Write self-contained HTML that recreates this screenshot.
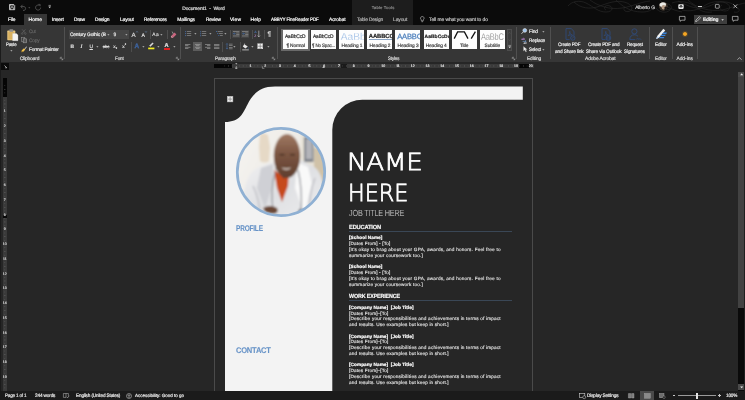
<!DOCTYPE html>
<html lang="en"><head><meta charset="utf-8"><title>Document1 - Word</title>
<style>
html,body{margin:0;padding:0;background:#262626;}
body{width:745px;height:400px;overflow:hidden;position:relative;font-family:"Liberation Sans",sans-serif;}
#w{position:absolute;left:0;top:0;width:745px;height:400px;overflow:hidden;background:#262626;will-change:transform;text-rendering:geometricPrecision;}
#w div,#w span.t,#w svg{position:absolute;}
#w span.t{white-space:nowrap;-webkit-text-stroke-width:0.18px;}
#w svg{overflow:visible;}
</style></head><body><div id="w">
<div style="left:0px;top:0px;width:745px;height:25px;background:#0b0b0b;"></div>
<div style="left:352px;top:0px;width:60.5px;height:25px;background:#1d1d1d;"></div>
<div style="left:24px;top:13.5px;width:23px;height:11.5px;background:#363636;"></div>
<div style="left:0px;top:25px;width:745px;height:36.5px;background:#363636;"></div>
<div style="left:0px;top:61.5px;width:745px;height:8.5px;background:#262626;"></div>
<span class="t" style="left:182.20px;top:7px;font-size:4.9px;line-height:5.88px;color:#e0e0e0;letter-spacing:-0.062px;white-space:pre;">Document1  -  Word</span>
<span class="t" style="left:371.80px;top:5px;font-size:4.2px;line-height:5.04px;color:#8c8c8c;letter-spacing:0.156px;">Table Tools</span>
<span class="t" style="left:635.20px;top:6px;font-size:4.9px;line-height:5.88px;color:#d8d8d8;letter-spacing:-0.100px;">Alberto G</span>
<span class="t" style="left:8.00px;top:18px;font-size:4.9px;line-height:5.88px;color:#ffffff;letter-spacing:-0.132px;">File</span>
<span class="t" style="left:28.50px;top:18px;font-size:4.9px;line-height:5.88px;color:#ffffff;letter-spacing:0.143px;">Home</span>
<span class="t" style="left:52.00px;top:18px;font-size:4.9px;line-height:5.88px;color:#ffffff;letter-spacing:-0.051px;">Insert</span>
<span class="t" style="left:74.00px;top:18px;font-size:4.9px;line-height:5.88px;color:#ffffff;letter-spacing:-0.145px;">Draw</span>
<span class="t" style="left:95.00px;top:18px;font-size:4.9px;line-height:5.88px;color:#ffffff;letter-spacing:-0.151px;">Design</span>
<span class="t" style="left:120.00px;top:18px;font-size:4.9px;line-height:5.88px;color:#ffffff;letter-spacing:-0.142px;">Layout</span>
<span class="t" style="left:144.00px;top:18px;font-size:4.9px;line-height:5.88px;color:#ffffff;letter-spacing:-0.147px;transform:scaleX(0.9690);transform-origin:0 50%;">References</span>
<span class="t" style="left:177.20px;top:18px;font-size:4.9px;line-height:5.88px;color:#ffffff;letter-spacing:-0.011px;">Mailings</span>
<span class="t" style="left:205.50px;top:18px;font-size:4.9px;line-height:5.88px;color:#ffffff;letter-spacing:-0.147px;transform:scaleX(0.9784);transform-origin:0 50%;">Review</span>
<span class="t" style="left:230.00px;top:18px;font-size:4.9px;line-height:5.88px;color:#ffffff;letter-spacing:0.156px;">View</span>
<span class="t" style="left:250.50px;top:18px;font-size:4.9px;line-height:5.88px;color:#ffffff;letter-spacing:0.141px;">Help</span>
<span class="t" style="left:270.80px;top:18px;font-size:4.9px;line-height:5.88px;color:#ffffff;letter-spacing:-0.147px;transform:scaleX(0.9305);transform-origin:0 50%;">ABBYY FineReader PDF</span>
<span class="t" style="left:329.00px;top:18px;font-size:4.9px;line-height:5.88px;color:#ffffff;letter-spacing:-0.048px;">Acrobat</span>
<span class="t" style="left:356.70px;top:18px;font-size:4.9px;line-height:5.88px;color:#b4b4b4;letter-spacing:-0.147px;transform:scaleX(0.9846);transform-origin:0 50%;">Table Design</span>
<span class="t" style="left:393.00px;top:18px;font-size:4.9px;line-height:5.88px;color:#b4b4b4;letter-spacing:-0.062px;">Layout</span>
<span class="t" style="left:429.00px;top:18px;font-size:4.9px;line-height:5.88px;color:#c4c4c4;letter-spacing:-0.056px;">Tell me what you want to do</span>
<div style="left:64.35px;top:27px;width:0.8px;height:31.5px;background:#505050;"></div>
<div style="left:180.2px;top:27px;width:0.8px;height:31.5px;background:#505050;"></div>
<div style="left:276.5px;top:27px;width:0.8px;height:31.5px;background:#505050;"></div>
<div style="left:516.1px;top:27px;width:0.8px;height:31.5px;background:#505050;"></div>
<div style="left:550.2px;top:27px;width:0.8px;height:31.5px;background:#505050;"></div>
<div style="left:649.35px;top:27px;width:0.8px;height:31.5px;background:#505050;"></div>
<div style="left:672.1px;top:27px;width:0.8px;height:31.5px;background:#505050;"></div>
<div style="left:696.9px;top:27px;width:0.8px;height:31.5px;background:#505050;"></div>
<div style="left:214.2px;top:77.6px;width:319.3px;height:320px;background:transparent;border:1.1px solid #4a4a4a;box-sizing:border-box;"></div>
<svg style="left:0px;top:0px;" width="745" height="400" viewBox="0 0 745 400"><path d="M225 392 V122 C240 122 243 113 247.5 104.5 C252 96 258 86.6 275 86.6 H522.8 V99.8 H362.3 A30 30 0 0 0 332.3 129.8 V392 Z" fill="#f3f3f3"/></svg>
<div style="left:0px;top:391px;width:745px;height:9px;background:#1b1b1b;"></div>
<span class="t" style="left:347.4px;top:147px;font:200 23.6px/30px 'DejaVu Sans','Liberation Sans',sans-serif;color:#fff;-webkit-text-stroke:0.8px #fff;transform-origin:0 50%;letter-spacing:-0.2px;transform:scaleX(1.105);">NAME</span>
<span class="t" style="left:347.8px;top:178px;font:200 23.6px/30px 'DejaVu Sans','Liberation Sans',sans-serif;color:#fff;-webkit-text-stroke:0.8px #fff;transform-origin:0 50%;letter-spacing:0px;transform:scaleX(0.945);">HERE</span>
<span class="t" style="left:349.00px;top:208px;font-size:8.9px;line-height:10.68px;color:#d2d2d2;letter-spacing:-0.267px;transform:scaleX(0.8227);transform-origin:0 50%;-webkit-text-stroke:0.15px #262626;">JOB TITLE HERE</span>
<span class="t" style="left:348.80px;top:225px;font-size:5.9px;line-height:7.08px;color:#f6f6f6;font-weight:bold;letter-spacing:-0.177px;transform:scaleX(0.9663);transform-origin:0 50%;">EDUCATION</span>
<div style="left:348.5px;top:230.5px;width:163.5px;height:0.9px;background:#3a4756;"></div>
<span class="t" style="left:348.80px;top:294px;font-size:5.9px;line-height:7.08px;color:#f6f6f6;font-weight:bold;letter-spacing:-0.177px;transform:scaleX(0.9163);transform-origin:0 50%;">WORK EXPERIENCE</span>
<div style="left:348.5px;top:299.9px;width:163.5px;height:0.9px;background:#3a4756;"></div>
<span class="t" style="left:349.00px;top:235px;font-size:4.7px;line-height:5.64px;color:#ffffff;font-weight:bold;letter-spacing:0.041px;">[School Name]</span>
<span class="t" style="left:349.00px;top:241px;font-size:4.7px;line-height:5.64px;color:#dedede;letter-spacing:0.133px;">[Dates From] - [To]</span>
<span class="t" style="left:349.00px;top:247px;font-size:4.7px;line-height:5.64px;color:#dedede;letter-spacing:0.195px;">[It&#x27;s okay to brag about your GPA, awards, and honors. Feel free to</span>
<span class="t" style="left:349.00px;top:253px;font-size:4.7px;line-height:5.64px;color:#dedede;letter-spacing:0.159px;">summarize your coursework too.]</span>
<span class="t" style="left:349.00px;top:264px;font-size:4.7px;line-height:5.64px;color:#ffffff;font-weight:bold;letter-spacing:0.041px;">[School Name]</span>
<span class="t" style="left:349.00px;top:270px;font-size:4.7px;line-height:5.64px;color:#dedede;letter-spacing:0.133px;">[Dates From] - [To]</span>
<span class="t" style="left:349.00px;top:276px;font-size:4.7px;line-height:5.64px;color:#dedede;letter-spacing:0.195px;">[It&#x27;s okay to brag about your GPA, awards, and honors. Feel free to</span>
<span class="t" style="left:349.00px;top:282px;font-size:4.7px;line-height:5.64px;color:#dedede;letter-spacing:0.159px;">summarize your coursework too.]</span>
<span class="t" style="left:349.00px;top:305px;font-size:4.7px;line-height:5.64px;color:#ffffff;font-weight:bold;letter-spacing:0.041px;white-space:pre;">[Company Name]  [Job Title]</span>
<span class="t" style="left:349.00px;top:311px;font-size:4.7px;line-height:5.64px;color:#dedede;letter-spacing:0.128px;">[Dates From]–[To]</span>
<span class="t" style="left:349.00px;top:316px;font-size:4.7px;line-height:5.64px;color:#dedede;letter-spacing:0.178px;">[Describe your responsibilities and achievements in terms of impact</span>
<span class="t" style="left:349.00px;top:322px;font-size:4.7px;line-height:5.64px;color:#dedede;letter-spacing:0.131px;">and results. Use examples but keep in short.]</span>
<span class="t" style="left:349.00px;top:334px;font-size:4.7px;line-height:5.64px;color:#ffffff;font-weight:bold;letter-spacing:0.041px;white-space:pre;">[Company Name]  [Job Title]</span>
<span class="t" style="left:349.00px;top:339px;font-size:4.7px;line-height:5.64px;color:#dedede;letter-spacing:0.128px;">[Dates From]–[To]</span>
<span class="t" style="left:349.00px;top:345px;font-size:4.7px;line-height:5.64px;color:#dedede;letter-spacing:0.178px;">[Describe your responsibilities and achievements in terms of impact</span>
<span class="t" style="left:349.00px;top:351px;font-size:4.7px;line-height:5.64px;color:#dedede;letter-spacing:0.131px;">and results. Use examples but keep in short.]</span>
<span class="t" style="left:349.00px;top:362px;font-size:4.7px;line-height:5.64px;color:#ffffff;font-weight:bold;letter-spacing:0.041px;white-space:pre;">[Company Name]  [Job Title]</span>
<span class="t" style="left:349.00px;top:368px;font-size:4.7px;line-height:5.64px;color:#dedede;letter-spacing:0.128px;">[Dates From]–[To]</span>
<span class="t" style="left:349.00px;top:374px;font-size:4.7px;line-height:5.64px;color:#dedede;letter-spacing:0.178px;">[Describe your responsibilities and achievements in terms of impact</span>
<span class="t" style="left:349.00px;top:380px;font-size:4.7px;line-height:5.64px;color:#dedede;letter-spacing:0.131px;">and results. Use examples but keep in short.]</span>
<span class="t" style="left:236.00px;top:224px;font-size:8.2px;line-height:9.84px;color:#6793c7;font-weight:bold;letter-spacing:-0.246px;transform:scaleX(0.7927);transform-origin:0 50%;-webkit-text-stroke-width:0.1px;">PROFILE</span>
<span class="t" style="left:236.00px;top:346px;font-size:8.2px;line-height:9.84px;color:#6793c7;font-weight:bold;letter-spacing:-0.246px;transform:scaleX(0.9211);transform-origin:0 50%;-webkit-text-stroke-width:0.1px;">CONTACT</span>
<svg style="left:226.9px;top:96.3px;" width="6.2" height="6.2" viewBox="0 0 6.2 6.2"><rect x="0.3" y="0.3" width="5.6" height="5.6" fill="#f0f0f0" stroke="#bdbdbd" stroke-width="0.5"/><path d="M3.1 1.1V5.1M1.1 3.1H5.1" stroke="#8a8a8a" stroke-width="0.8" fill="none"/></svg>
<svg style="left:235px;top:126px;" width="92" height="92" viewBox="0 0 92 92"><defs><clipPath id="pc"><circle cx="46" cy="46" r="43.6"/></clipPath>
<filter id="pb" x="-20%" y="-20%" width="140%" height="140%"><feGaussianBlur stdDeviation="0.9"/></filter>
<linearGradient id="pg" x1="0" y1="0" x2="1" y2="0.5"><stop offset="0" stop-color="#f6f5f2"/><stop offset="0.65" stop-color="#eeebe5"/><stop offset="1" stop-color="#d8cfbe"/></linearGradient>
<linearGradient id="cg" x1="0" y1="0" x2="1" y2="1"><stop offset="0" stop-color="#f0f0f1"/><stop offset="0.5" stop-color="#dfe0e3"/><stop offset="1" stop-color="#ededee"/></linearGradient>
<linearGradient id="fg" x1="0" y1="0" x2="0" y2="1"><stop offset="0" stop-color="#a07a64"/><stop offset="0.45" stop-color="#7c5642"/><stop offset="1" stop-color="#5e3e2e"/></linearGradient></defs>
<circle cx="46" cy="46" r="44" fill="#ece9e3"/>
<g clip-path="url(#pc)"><g filter="url(#pb)">
<rect x="0" y="0" width="92" height="92" fill="url(#pg)"/>
<path d="M25 8 q4 -2 8 1 l2 12 l-1 14 q-4 3 -9 0 l-1 -14z" fill="#e6d9c6"/>
<rect x="66" y="8" width="24" height="36" fill="#e6e1d6"/>
<rect x="69" y="11" width="9.5" height="25" fill="#7d8189"/>
<rect x="71" y="13" width="6" height="20" fill="#b3b4b9"/>
<rect x="79" y="22" width="12" height="44" fill="#d0c2a8"/>
<path d="M8 78 C9 58 13 46 24 41 L40 35 L66 34 L78 40 C87 46 89 58 88 72 C82 88 64 94 46 94 C28 94 14 90 8 78 Z" fill="url(#cg)"/>
<path d="M26 42 L38 38 L38 58 L30 82 L22 62 Z" fill="#cfd0d5"/>
<path d="M62 36 L73 41 L77 58 L69 88 L60 62 Z" fill="#f9f9f9"/>
<path d="M18 60 C23 70 25 78 25 90 M80 52 C76 62 74 74 75 86" stroke="#c0c1c7" stroke-width="1.5" fill="none"/>
<path d="M39 44 L48 50 L54 45 L53 60 L47 76 L42 62 Z" fill="#c6481f"/>
<path d="M40 42 L49 53 L58 41 Z" fill="#5e3f2e"/>
<ellipse cx="52" cy="30" rx="13.2" ry="22" fill="url(#fg)"/>
<path d="M44.5 28.6 h5 M55 28.6 h5" stroke="#3a251a" stroke-width="1.3"/>
<path d="M46 41.2 q5.4 2.4 10.6 0 q-5.2 5.2 -10.6 0z" fill="#f4eee9"/>
<path d="M40 46 C37 58 36 70 38 84 M63 44 C66 56 67 70 66 86" stroke="#8d8f96" stroke-width="1.2" fill="none"/>
<path d="M28 82 q7 -4 14 0 q2 4 -2 5.6 q-10 1 -12 -5.6z" fill="#6a4635"/>
<ellipse cx="66" cy="86" rx="2.8" ry="3.2" fill="#787b82"/>
</g></g>
<circle cx="46" cy="46" r="43.7" fill="none" stroke="#8fb0d3" stroke-width="2.7"/></svg>
<svg style="left:560px;top:0px;" width="185" height="14" viewBox="0 0 185 14"><g fill="none" stroke="#2b2b2b" stroke-width="0.6">
<path d="M8 6 C12 1 20 0 26 3 C34 7 38 12 46 12 C52 12 54 8 50 6 C46 4 42 8 46 10"/>
<path d="M14 2 C20 8 30 10 40 6 C48 3 56 0 64 2 C72 4 74 9 70 11 C66 13 62 10 65 7"/>
<path d="M30 0 C38 6 50 10 62 8 C74 6 80 2 90 1"/>
<path d="M56 0 C62 6 70 12 82 12 C90 12 94 9 92 6"/>
<path d="M96 8 C98 12 106 14 110 10 C114 6 108 2 104 5 C101 8 106 11 110 9"/>
<path d="M112 3 C120 0 130 2 136 7 C140 11 146 13 152 12"/>
<path d="M118 1 C126 5 134 9 142 8 C150 7 154 3 160 2 C168 1 174 4 178 8 C181 11 178 13 174 12"/>
<path d="M122 10 C130 12 138 10 144 6 C150 2 158 0 166 3 C172 6 170 11 165 11 C160 11 158 7 162 5"/>
<path d="M128 0 C136 8 150 12 162 10 C172 8 178 4 185 3"/>
<path d="M100 0 C104 6 112 10 122 12"/>
</g></svg>
<svg style="left:8.7px;top:4.1px;" width="6.2" height="6.2" viewBox="0 0 6.2 6.2"><path d="M0.5 0.5H4.7L5.7 1.5V5.7H0.5Z" fill="none" stroke="#ececec" stroke-width="0.8" stroke-linejoin="round"/><path d="M1.7 0.6V2.2H4.2V0.6" fill="none" stroke="#ececec" stroke-width="0.65"/><path d="M1.6 5.6V3.7H4.6V5.6" fill="none" stroke="#ececec" stroke-width="0.65"/></svg>
<svg style="left:19.5px;top:4px;" width="7" height="7" viewBox="0 0 7 7"><path d="M1 2.6H4.2A2 2 0 0 1 4.2 6.4H3" fill="none" stroke="#5e5e5e" stroke-width="0.8"/><path d="M2.6 0.8L0.8 2.6L2.6 4.4" fill="none" stroke="#5e5e5e" stroke-width="0.8"/></svg>
<svg style="left:28.2px;top:6.8px;" width="2.6" height="1.8" viewBox="0 0 2.6 1.8"><path d="M0.3 0.3H2.3L1.3 1.4Z" fill="#5a5a5a"/></svg>
<svg style="left:34.5px;top:3.8px;" width="7" height="7" viewBox="0 0 7 7"><path d="M4.6 1.6A2.5 2.5 0 1 0 5.6 3.6" fill="none" stroke="#5e5e5e" stroke-width="0.8"/><path d="M3.4 0.4H5.2V2.2" fill="none" stroke="#5e5e5e" stroke-width="0.7"/></svg>
<svg style="left:48px;top:5.2px;" width="3.4" height="4" viewBox="0 0 3.4 4"><path d="M0.5 0.4H2.9" stroke="#d0d0d0" stroke-width="0.6"/><path d="M0.4 1.6H3L1.7 3.2Z" fill="#d0d0d0"/></svg>
<svg style="left:658.6px;top:1.7px;" width="8.6" height="8.6" viewBox="0 0 8.6 8.6"><defs><clipPath id="av"><circle cx="4.3" cy="4.3" r="4.2"/></clipPath><filter id="avb"><feGaussianBlur stdDeviation="0.5"/></filter></defs>
<circle cx="4.3" cy="4.3" r="4.2" fill="#4a4038"/><g clip-path="url(#av)"><g filter="url(#avb)"><rect width="8.6" height="8.6" fill="#3d342c"/>
<ellipse cx="3.6" cy="2.6" rx="3.4" ry="2.4" fill="#ecebe6"/><ellipse cx="4.6" cy="5.2" rx="2" ry="2.2" fill="#b39a84"/><rect x="5.5" y="5" width="3.5" height="4" fill="#1d1915"/></g></g></svg>
<svg style="left:678.4px;top:3.5px;" width="6" height="5.2" viewBox="0 0 6 5.2"><rect x="0.3" y="0.3" width="5.4" height="4.6" rx="0.8" fill="#e6e6e6"/><path d="M3 1.2V3.9M1.9 2.2L3 1.1L4.1 2.2M1.2 2.6H4.8" stroke="#0b0b0b" stroke-width="0.6" fill="none"/></svg>
<div style="left:697.8px;top:5.6px;width:3.8px;height:0.6px;background:#cfcfcf;"></div>
<svg style="left:715.2px;top:4px;" width="4.6" height="4.6" viewBox="0 0 4.6 4.6"><rect x="0.4" y="0.4" width="3.8" height="3.8" rx="0.6" fill="none" stroke="#cfcfcf" stroke-width="0.7"/></svg>
<svg style="left:733.3px;top:4px;" width="4.6" height="4.6" viewBox="0 0 4.6 4.6"><path d="M0.4 0.4L4.2 4.2M4.2 0.4L0.4 4.2" stroke="#e0e0e0" stroke-width="0.7" fill="none"/></svg>
<svg style="left:678.7px;top:16.2px;" width="6.5" height="6" viewBox="0 0 6.5 6"><path d="M0.4 0.4H6V4.2H2.6L1.4 5.4V4.2H0.4Z" fill="none" stroke="#c8c8c8" stroke-width="0.7" stroke-linejoin="round"/></svg>
<div style="left:694px;top:15.1px;width:33.1px;height:8.5px;background:#3e3e3e;"></div>
<svg style="left:695.2px;top:16.4px;" width="6.4" height="6.2" viewBox="0 0 6.4 6.2"><path d="M0.6 5.6L1 4L4.4 0.6L5.6 1.8L2.2 5.2Z" fill="none" stroke="#d8d8d8" stroke-width="0.7" stroke-linejoin="round"/></svg>
<span class="t" style="left:703.20px;top:18px;font-size:4.9px;line-height:5.88px;color:#f0f0f0;font-weight:bold;letter-spacing:-0.147px;transform:scaleX(0.9796);transform-origin:0 50%;">Editing</span>
<svg style="left:721px;top:18.7px;" width="3.2" height="2.2" viewBox="0 0 3.2 2.2"><path d="M0.3 0.3H2.9L1.6 1.7Z" fill="#e0e0e0"/></svg>
<svg style="left:732.2px;top:16.2px;" width="6.5" height="6" viewBox="0 0 6.5 6"><path d="M0.4 0.4H6V4.2H2.6L1.4 5.4V4.2H0.4Z" fill="none" stroke="#c8c8c8" stroke-width="0.7" stroke-linejoin="round"/></svg>
<svg style="left:419.6px;top:15.6px;" width="4.6" height="7" viewBox="0 0 4.6 7"><path d="M2.3 0.5A1.8 1.8 0 0 1 3.3 3.8V4.8H1.3V3.8A1.8 1.8 0 0 1 2.3 0.5Z" fill="none" stroke="#c8c8c8" stroke-width="0.6"/><path d="M1.5 5.7H3.1" stroke="#c8c8c8" stroke-width="0.6"/></svg>
<span class="t" style="left:19.70px;top:57px;font-size:4.9px;line-height:5.88px;color:#dedede;letter-spacing:-0.159px;">Clipboard</span>
<span class="t" style="left:115.20px;top:57px;font-size:4.9px;line-height:5.88px;color:#dedede;letter-spacing:-0.147px;transform:scaleX(0.9398);transform-origin:0 50%;">Font</span>
<span class="t" style="left:215.00px;top:57px;font-size:4.9px;line-height:5.88px;color:#dedede;letter-spacing:-0.147px;transform:scaleX(0.9674);transform-origin:0 50%;">Paragraph</span>
<span class="t" style="left:388.20px;top:57px;font-size:4.9px;line-height:5.88px;color:#dedede;letter-spacing:-0.147px;transform:scaleX(0.9041);transform-origin:0 50%;">Styles</span>
<span class="t" style="left:526.90px;top:57px;font-size:4.9px;line-height:5.88px;color:#dedede;letter-spacing:-0.105px;">Editing</span>
<span class="t" style="left:585.00px;top:57px;font-size:4.9px;line-height:5.88px;color:#dedede;letter-spacing:-0.129px;">Adobe Acrobat</span>
<span class="t" style="left:655.00px;top:57px;font-size:4.9px;line-height:5.88px;color:#dedede;letter-spacing:-0.147px;transform:scaleX(0.9863);transform-origin:0 50%;">Editor</span>
<span class="t" style="left:676.40px;top:57px;font-size:4.9px;line-height:5.88px;color:#dedede;letter-spacing:-0.002px;">Add-ins</span>
<svg style="left:60.2px;top:56.5px;" width="3" height="3" viewBox="0 0 3 3"><path d="M0.3 2V0.3H2M1.2 1.2L2.7 2.7M2.8 1.4V2.8H1.4" fill="none" stroke="#bdbdbd" stroke-width="0.5"/></svg>
<svg style="left:176.2px;top:56.5px;" width="3" height="3" viewBox="0 0 3 3"><path d="M0.3 2V0.3H2M1.2 1.2L2.7 2.7M2.8 1.4V2.8H1.4" fill="none" stroke="#bdbdbd" stroke-width="0.5"/></svg>
<svg style="left:272.4px;top:56.5px;" width="3" height="3" viewBox="0 0 3 3"><path d="M0.3 2V0.3H2M1.2 1.2L2.7 2.7M2.8 1.4V2.8H1.4" fill="none" stroke="#bdbdbd" stroke-width="0.5"/></svg>
<svg style="left:511.8px;top:56.5px;" width="3" height="3" viewBox="0 0 3 3"><path d="M0.3 2V0.3H2M1.2 1.2L2.7 2.7M2.8 1.4V2.8H1.4" fill="none" stroke="#bdbdbd" stroke-width="0.5"/></svg>
<svg style="left:737px;top:57.3px;" width="5" height="3.2" viewBox="0 0 5 3.2"><path d="M0.4 2.8L2.5 0.6L4.6 2.8" fill="none" stroke="#d0d0d0" stroke-width="0.7"/></svg>
<svg style="left:6.6px;top:28.6px;" width="11.4" height="12" viewBox="0 0 11.4 12"><rect x="0.3" y="1.6" width="8" height="9.6" rx="0.6" fill="#e9c77f"/><rect x="2.4" y="0.3" width="3.8" height="2.4" rx="0.5" fill="#8c8c8c"/>
<rect x="1.3" y="3" width="6" height="7.4" fill="#d9b15f"/><path d="M5.6 4.4H9.4L11 6V11.7H5.6Z" fill="#f4f4f4" stroke="#cfcfcf" stroke-width="0.3"/></svg>
<span class="t" style="left:6.30px;top:43px;font-size:4.9px;line-height:5.88px;color:#f0f0f0;letter-spacing:-0.147px;transform:scaleX(0.8876);transform-origin:0 50%;">Paste</span>
<svg style="left:10.1px;top:49.7px;" width="2.8" height="1.8" viewBox="0 0 2.8 1.8"><path d="M0.3 0.35H2.5L1.4 1.5Z" fill="#c4c4c4"/></svg>
<svg style="left:21px;top:28.8px;" width="5.6" height="5.6" viewBox="0 0 5.6 5.6"><path d="M1.2 0.4L4.2 4M4.4 0.4L1.4 4" stroke="#6a6a6a" stroke-width="0.6" fill="none"/><circle cx="1.2" cy="4.6" r="0.8" fill="none" stroke="#6a6a6a" stroke-width="0.5"/><circle cx="4.4" cy="4.6" r="0.8" fill="none" stroke="#6a6a6a" stroke-width="0.5"/></svg>
<span class="t" style="left:28.80px;top:30px;font-size:4.9px;line-height:5.88px;color:#666666;letter-spacing:-0.147px;transform:scaleX(0.9275);transform-origin:0 50%;">Cut</span>
<svg style="left:20.8px;top:37.2px;" width="6" height="6" viewBox="0 0 6 6"><rect x="0.4" y="0.4" width="3.4" height="4" fill="none" stroke="#8a8a8a" stroke-width="0.6"/><rect x="2.2" y="1.8" width="3.4" height="4" fill="#565656" stroke="#9a9a9a" stroke-width="0.6"/></svg>
<span class="t" style="left:28.80px;top:39px;font-size:4.9px;line-height:5.88px;color:#666666;letter-spacing:-0.147px;transform:scaleX(0.9729);transform-origin:0 50%;">Copy</span>
<svg style="left:20.8px;top:46px;" width="6.4" height="6.4" viewBox="0 0 6.4 6.4"><path d="M3.6 2.4L5.6 0.4L6 0.8L4.2 3Z" fill="#e8e8e8"/><path d="M0.6 4.6L3 2.2L4.4 3.6L2 6Z" fill="#f2c14e"/><path d="M0.6 4.6L2 6L0.4 6.2Z" fill="#c99722"/></svg>
<span class="t" style="left:28.80px;top:48px;font-size:4.9px;line-height:5.88px;color:#f0f0f0;letter-spacing:-0.147px;transform:scaleX(0.9805);transform-origin:0 50%;">Format Painter</span>
<div style="left:68.5px;top:30px;width:42.1px;height:8.6px;background:#454545;"></div>
<div style="left:110.9px;top:30px;width:17.8px;height:8.6px;background:#454545;"></div>
<span class="t" style="left:69.60px;top:33px;font-size:4.9px;line-height:5.88px;color:#f0f0f0;letter-spacing:-0.147px;transform:scaleX(0.9839);transform-origin:0 50%;">Century Gothic (B</span>
<svg style="left:106.9px;top:33.7px;" width="2.8" height="1.8" viewBox="0 0 2.8 1.8"><path d="M0.3 0.35H2.5L1.4 1.5Z" fill="#c4c4c4"/></svg>
<span class="t" style="left:113.60px;top:33px;font-size:4.9px;line-height:5.88px;color:#e4e4e4;">9</span>
<svg style="left:124.8px;top:33.7px;" width="2.8" height="1.8" viewBox="0 0 2.8 1.8"><path d="M0.3 0.35H2.5L1.4 1.5Z" fill="#c4c4c4"/></svg>
<span class="t" style="left:131.60px;top:32px;font-size:6.2px;line-height:7.44px;color:#dcdcdc;">A</span>
<svg style="left:136px;top:30.6px;" width="2" height="1.6" viewBox="0 0 2 1.6"><path d="M0.2 1.4L1 0.4L1.8 1.4" stroke="#7aa7e0" stroke-width="0.5" fill="none"/></svg>
<span class="t" style="left:141.60px;top:33px;font-size:5.2px;line-height:6.24px;color:#dcdcdc;">A</span>
<svg style="left:145px;top:31px;" width="2" height="1.6" viewBox="0 0 2 1.6"><path d="M0.2 0.4L1 1.4L1.8 0.4" stroke="#7aa7e0" stroke-width="0.5" fill="none"/></svg>
<div style="left:149.6px;top:29.5px;width:0.6px;height:9.5px;background:#4e4e4e;"></div>
<span class="t" style="left:152.20px;top:33px;font-size:4.8px;line-height:5.76px;color:#dcdcdc;letter-spacing:0.529px;">Aa</span>
<svg style="left:160.2px;top:33.7px;" width="2.8" height="1.8" viewBox="0 0 2.8 1.8"><path d="M0.3 0.35H2.5L1.4 1.5Z" fill="#c4c4c4"/></svg>
<div style="left:166.7px;top:29.5px;width:0.6px;height:9.5px;background:#4e4e4e;"></div>
<svg style="left:170px;top:30.6px;" width="7" height="7.4" viewBox="0 0 7 7.4"><path d="M2.2 0.6L3.4 3" stroke="#d0d0d0" stroke-width="0.6"/><path d="M1.6 4.4L4.6 1.6L6.4 3.4L3.4 6.4Z" fill="#c9657e"/><path d="M1.6 4.4L3.4 6.4L1.8 6.9L0.8 5.8Z" fill="#d9909f"/></svg>
<span class="t" style="left:70.40px;top:45px;font-size:4.9px;line-height:5.88px;color:#dedede;font-weight:bold;">B</span>
<span class="t" style="left:80.40px;top:45px;font-size:4.9px;line-height:5.88px;color:#dedede;font-style:italic;font-family:'Liberation Serif',serif;font-weight:bold;">I</span>
<span class="t" style="left:89.40px;top:45px;font-size:4.9px;line-height:5.88px;color:#dedede;text-decoration:underline;">U</span>
<svg style="left:96.2px;top:45.9px;" width="2.8" height="1.8" viewBox="0 0 2.8 1.8"><path d="M0.3 0.35H2.5L1.4 1.5Z" fill="#c4c4c4"/></svg>
<span class="t" style="left:102.70px;top:44px;font-size:4.3px;line-height:5.16px;color:#d4d4d4;letter-spacing:-0.117px;text-decoration:line-through;">abc</span>
<span class="t" style="left:113.20px;top:45px;font-size:4.8px;line-height:5.76px;color:#dedede;">x</span>
<span class="t" style="left:115.80px;top:47px;font-size:2.6px;line-height:3.12px;color:#dedede;">2</span>
<span class="t" style="left:122.20px;top:45px;font-size:4.8px;line-height:5.76px;color:#dedede;">x</span>
<span class="t" style="left:124.80px;top:43px;font-size:2.6px;line-height:3.12px;color:#dedede;">2</span>
<div style="left:131px;top:42px;width:0.6px;height:9.5px;background:#4e4e4e;"></div>
<span class="t" style="left:134.60px;top:43px;font-size:6.4px;line-height:7.68px;color:#2f4f82;font-weight:bold;-webkit-text-stroke:0.3px #4a76b8;">A</span>
<svg style="left:141.8px;top:45.9px;" width="2.8" height="1.8" viewBox="0 0 2.8 1.8"><path d="M0.3 0.35H2.5L1.4 1.5Z" fill="#c4c4c4"/></svg>
<svg style="left:148.4px;top:42.4px;" width="6.6" height="7.6" viewBox="0 0 6.6 7.6"><path d="M1.4 3.6L4.6 0.6L5.6 1.6L2.6 4.6Z" fill="#d8d8d8"/><path d="M1 3.2L3 4.8" stroke="#bbb" stroke-width="0.5"/><rect x="0.2" y="5.6" width="6.2" height="1.7" fill="#f5ee1f"/></svg>
<svg style="left:157.4px;top:45.9px;" width="2.8" height="1.8" viewBox="0 0 2.8 1.8"><path d="M0.3 0.35H2.5L1.4 1.5Z" fill="#c4c4c4"/></svg>
<span class="t" style="left:164.60px;top:43px;font-size:5.6px;line-height:6.72px;color:#e6e6e6;font-weight:bold;">A</span>
<div style="left:163.6px;top:48.3px;width:6.4px;height:1.7px;background:#e02020;"></div>
<svg style="left:172.6px;top:45.9px;" width="2.8" height="1.8" viewBox="0 0 2.8 1.8"><path d="M0.3 0.35H2.5L1.4 1.5Z" fill="#c4c4c4"/></svg>
<svg style="left:185px;top:30.8px;" width="7" height="6" viewBox="0 0 7 6"><g fill="#4670ad"><rect x="0" y="0.2" width="0.9" height="0.9"/><rect x="0" y="2.2" width="0.9" height="0.9"/><rect x="0" y="4.2" width="0.9" height="0.9"/></g><g fill="#a6a6a6"><rect x="1.8" y="0.4" width="4.4" height="0.55"/><rect x="1.8" y="2.4" width="4.4" height="0.55"/><rect x="1.8" y="4.4" width="4.4" height="0.55"/></g></svg>
<svg style="left:193.6px;top:32.7px;" width="2.8" height="1.8" viewBox="0 0 2.8 1.8"><path d="M0.3 0.35H2.5L1.4 1.5Z" fill="#c4c4c4"/></svg>
<svg style="left:200.4px;top:30.8px;" width="7" height="6" viewBox="0 0 7 6"><g fill="#4670ad"><rect x="0.2" y="0" width="0.6" height="1.3"/><rect x="0.2" y="2" width="0.6" height="1.3"/><rect x="0.2" y="4" width="0.6" height="1.3"/></g><g fill="#a6a6a6"><rect x="1.8" y="0.4" width="4.4" height="0.55"/><rect x="1.8" y="2.4" width="4.4" height="0.55"/><rect x="1.8" y="4.4" width="4.4" height="0.55"/></g></svg>
<svg style="left:208.8px;top:32.7px;" width="2.8" height="1.8" viewBox="0 0 2.8 1.8"><path d="M0.3 0.35H2.5L1.4 1.5Z" fill="#c4c4c4"/></svg>
<svg style="left:215.6px;top:30.8px;" width="7.4" height="6" viewBox="0 0 7.4 6"><g fill="#4670ad"><rect x="0" y="0.1" width="0.9" height="0.9"/><rect x="1.2" y="2.1" width="0.9" height="0.9"/><rect x="2.4" y="4.1" width="0.9" height="0.9"/></g><g fill="#a6a6a6"><rect x="1.6" y="0.3" width="5.2" height="0.55"/><rect x="2.8" y="2.3" width="4" height="0.55"/><rect x="4" y="4.3" width="2.8" height="0.55"/></g></svg>
<svg style="left:224px;top:32.7px;" width="2.8" height="1.8" viewBox="0 0 2.8 1.8"><path d="M0.3 0.35H2.5L1.4 1.5Z" fill="#c4c4c4"/></svg>
<div style="left:229.9px;top:29.5px;width:0.6px;height:9.5px;background:#4e4e4e;"></div>
<div style="left:232.2px;top:29.6px;width:7.4px;height:8.4px;background:#424242;"></div>
<svg style="left:232.8px;top:30.8px;" width="7" height="6" viewBox="0 0 7 6"><g fill="#a6a6a6"><rect x="0" y="0.2" width="6.4" height="0.55"/><rect x="3.2" y="1.7" width="3.2" height="0.55"/><rect x="3.2" y="3.2" width="3.2" height="0.55"/><rect x="0" y="4.7" width="6.4" height="0.55"/></g><path d="M2.6 2.6H0.4M1.4 1.6L0.4 2.6L1.4 3.6" stroke="#4670ad" stroke-width="0.6" fill="none"/></svg>
<div style="left:241.4px;top:29.6px;width:7.4px;height:8.4px;background:#424242;"></div>
<svg style="left:242px;top:30.8px;" width="7" height="6" viewBox="0 0 7 6"><g fill="#a6a6a6"><rect x="0" y="0.2" width="6.4" height="0.55"/><rect x="3.2" y="1.7" width="3.2" height="0.55"/><rect x="3.2" y="3.2" width="3.2" height="0.55"/><rect x="0" y="4.7" width="6.4" height="0.55"/></g><path d="M0.2 2.6H2.4M1.4 1.6L2.4 2.6L1.4 3.6" stroke="#4670ad" stroke-width="0.6" fill="none"/></svg>
<div style="left:252.3px;top:29.5px;width:0.6px;height:9.5px;background:#4e4e4e;"></div>
<svg style="left:254.4px;top:29.8px;" width="7" height="8" viewBox="0 0 7 8"><text x="0.2" y="3.3" font-size="3.4" font-weight="bold" fill="#4670ad" font-family="Liberation Sans,sans-serif">A</text><text x="0.3" y="7.2" font-size="3.4" font-weight="bold" fill="#b686c8" font-family="Liberation Sans,sans-serif">Z</text><path d="M4.8 0.6V6.8M3.6 5.6L4.8 6.9L6 5.6" stroke="#d0d0d0" stroke-width="0.6" fill="none"/></svg>
<div style="left:263.8px;top:29.5px;width:0.6px;height:9.5px;background:#4e4e4e;"></div>
<span class="t" style="left:267.60px;top:31px;font-size:6.4px;line-height:7.68px;color:#d6d6d6;">¶</span>
<svg style="left:185.4px;top:44.3px;" width="6" height="6" viewBox="0 0 6 6"><rect x="0" y="0" width="5.4" height="0.6" fill="#a6a6a6"/><rect x="0" y="1.45" width="3.4" height="0.6" fill="#a6a6a6"/><rect x="0" y="2.9" width="5.4" height="0.6" fill="#a6a6a6"/><rect x="0" y="4.35" width="3.4" height="0.6" fill="#a6a6a6"/></svg>
<div style="left:193px;top:42.2px;width:9.2px;height:9px;background:#5c5c5c;"></div>
<svg style="left:195px;top:44.3px;" width="6" height="6" viewBox="0 0 6 6"><rect x="0" y="0" width="5.4" height="0.6" fill="#a6a6a6"/><rect x="1" y="1.45" width="3.4" height="0.6" fill="#a6a6a6"/><rect x="0" y="2.9" width="5.4" height="0.6" fill="#a6a6a6"/><rect x="1" y="4.35" width="3.4" height="0.6" fill="#a6a6a6"/></svg>
<svg style="left:204.6px;top:44.3px;" width="6" height="6" viewBox="0 0 6 6"><rect x="0" y="0" width="5.4" height="0.6" fill="#a6a6a6"/><rect x="2" y="1.45" width="3.4" height="0.6" fill="#a6a6a6"/><rect x="0" y="2.9" width="5.4" height="0.6" fill="#a6a6a6"/><rect x="2" y="4.35" width="3.4" height="0.6" fill="#a6a6a6"/></svg>
<svg style="left:213.6px;top:44.3px;" width="6" height="6" viewBox="0 0 6 6"><rect x="0" y="0" width="5.4" height="0.6" fill="#a6a6a6"/><rect x="0" y="1.45" width="5.4" height="0.6" fill="#a6a6a6"/><rect x="0" y="2.9" width="5.4" height="0.6" fill="#a6a6a6"/><rect x="0" y="4.35" width="5.4" height="0.6" fill="#a6a6a6"/></svg>
<div style="left:222.3px;top:42px;width:0.6px;height:9.5px;background:#4e4e4e;"></div>
<svg style="left:225.6px;top:43.2px;" width="7" height="7" viewBox="0 0 7 7"><path d="M1 0.6V6M0.1 1.5L1 0.5L1.9 1.5M0.1 5.1L1 6.1L1.9 5.1" stroke="#4670ad" stroke-width="0.55" fill="none"/><g fill="#a6a6a6"><rect x="3" y="0.8" width="3.6" height="0.55"/><rect x="3" y="2.4" width="3.6" height="0.55"/><rect x="3" y="4" width="3.6" height="0.55"/><rect x="3" y="5.6" width="3.6" height="0.55"/></g></svg>
<svg style="left:233.2px;top:45.9px;" width="2.8" height="1.8" viewBox="0 0 2.8 1.8"><path d="M0.3 0.35H2.5L1.4 1.5Z" fill="#c4c4c4"/></svg>
<div style="left:239.8px;top:42px;width:0.6px;height:9.5px;background:#4e4e4e;"></div>
<svg style="left:242.4px;top:42.6px;" width="7.4" height="7.8" viewBox="0 0 7.4 7.8"><path d="M2.2 1.2L5.8 3.4L3.4 5.6L0.8 3.4Z" fill="#e6e6e6"/><path d="M2.6 0.4V2.2" stroke="#d0d0d0" stroke-width="0.5"/><path d="M6.2 4.2q0.8 1.2 0 1.6q-0.8 -0.4 0 -1.6z" fill="#4670ad"/><rect x="0.2" y="6.2" width="6.6" height="1.3" fill="#9a9a9a"/></svg>
<svg style="left:251.2px;top:45.9px;" width="2.8" height="1.8" viewBox="0 0 2.8 1.8"><path d="M0.3 0.35H2.5L1.4 1.5Z" fill="#c4c4c4"/></svg>
<svg style="left:257.4px;top:43.4px;" width="6.4" height="6.4" viewBox="0 0 6.4 6.4"><rect x="0.4" y="0.4" width="5.6" height="5.6" fill="#f4f4f4"/><path d="M3.2 0.6V5.8M0.6 3.2H5.8" stroke="#555" stroke-width="0.55"/><rect x="0.7" y="0.7" width="5" height="5" fill="none" stroke="#777" stroke-width="0.4"/></svg>
<svg style="left:266.6px;top:45.9px;" width="2.8" height="1.8" viewBox="0 0 2.8 1.8"><path d="M0.3 0.35H2.5L1.4 1.5Z" fill="#c4c4c4"/></svg>
<div style="left:281.4px;top:28.5px;width:28.3px;height:22px;background:#6a6a6a;"></div>
<div style="left:283px;top:30px;width:25.1px;height:19px;background:#fdfdfd;"></div>
<div style="left:311.1px;top:30px;width:25.1px;height:19px;background:#fdfdfd;"></div>
<div style="left:339.2px;top:30px;width:25.1px;height:19px;background:#fdfdfd;"></div>
<div style="left:367.3px;top:30px;width:25.1px;height:19px;background:#fdfdfd;"></div>
<div style="left:395.4px;top:30px;width:25.1px;height:19px;background:#fdfdfd;"></div>
<div style="left:423.5px;top:30px;width:25.1px;height:19px;background:#fdfdfd;"></div>
<div style="left:451.6px;top:30px;width:25.1px;height:19px;background:#fdfdfd;"></div>
<div style="left:479.7px;top:30px;width:25.1px;height:19px;background:#fdfdfd;"></div>
<div style="left:283px;top:30px;width:25.1px;height:19px;overflow:hidden;"><span class="t" style="left:2.20px;top:4px;font-size:5.2px;line-height:6.24px;color:#2c2c2c;letter-spacing:-0.156px;transform:scaleX(0.9408);transform-origin:0 50%;">AaBbCcD</span><span class="t" style="left:3.40px;top:14px;font-size:4.8px;line-height:5.76px;color:#3a3a3a;letter-spacing:-0.112px;">¶ Normal</span></div>
<div style="left:311.1px;top:30px;width:25.1px;height:19px;overflow:hidden;"><span class="t" style="left:2.20px;top:4px;font-size:5.2px;line-height:6.24px;color:#2c2c2c;letter-spacing:-0.156px;transform:scaleX(0.9408);transform-origin:0 50%;">AaBbCcD</span><span class="t" style="left:1.00px;top:14px;font-size:4.8px;line-height:5.76px;color:#3a3a3a;letter-spacing:-0.144px;transform:scaleX(0.9378);transform-origin:0 50%;">¶ No Spac...</span></div>
<div style="left:339.2px;top:30px;width:25.1px;height:19px;overflow:hidden;"><span class="t" style="left:1.60px;top:2px;font-size:10.2px;line-height:12.24px;color:#84ade0;letter-spacing:0.012px;-webkit-text-stroke:0.3px #fdfdfd;">AaBb(</span><span class="t" style="left:2.20px;top:14px;font-size:4.8px;line-height:5.76px;color:#3a3a3a;letter-spacing:-0.111px;">Heading 1</span></div>
<div style="left:367.3px;top:30px;width:25.1px;height:19px;overflow:hidden;"><span class="t" style="left:1.50px;top:4px;font-size:5.9px;line-height:7.08px;color:#1c1c1c;font-weight:bold;letter-spacing:-0.113px;">AABBCC</span><div style="left:1.4px;top:8.8px;width:23px;height:0.5px;background:#8aa4c4"></div><span class="t" style="left:2.20px;top:14px;font-size:4.8px;line-height:5.76px;color:#3a3a3a;letter-spacing:-0.111px;">Heading 2</span></div>
<div style="left:395.4px;top:30px;width:25.1px;height:19px;overflow:hidden;"><span class="t" style="left:1.80px;top:2px;font-size:7.6px;line-height:9.12px;color:#4f81bd;letter-spacing:-0.192px;-webkit-text-stroke:0.25px #4f81bd;">AABBC</span><span class="t" style="left:2.20px;top:14px;font-size:4.8px;line-height:5.76px;color:#3a3a3a;letter-spacing:-0.111px;">Heading 3</span></div>
<div style="left:423.5px;top:30px;width:25.1px;height:19px;overflow:hidden;"><span class="t" style="left:1.10px;top:5px;font-size:4.9px;line-height:5.88px;color:#1c1c1c;font-weight:bold;letter-spacing:0.082px;">AaBbCcDc</span><span class="t" style="left:2.20px;top:14px;font-size:4.8px;line-height:5.76px;color:#3a3a3a;letter-spacing:-0.111px;">Heading 4</span></div>
<div style="left:451.6px;top:30px;width:25.1px;height:19px;overflow:hidden;"><svg style="left:0;top:0" width="25.1" height="19" viewBox="0 0 25.1 19"><path d="M2.2 8.6L5.6 1.9H12.4L16 8.6M19.2 8.6L23.4 1.6" fill="none" stroke="#111" stroke-width="1.3"/></svg><span class="t" style="left:8.40px;top:14px;font-size:4.8px;line-height:5.76px;color:#3a3a3a;letter-spacing:-0.123px;">Title</span></div>
<div style="left:479.7px;top:30px;width:25.1px;height:19px;overflow:hidden;"><span class="t" style="left:1.50px;top:2px;font-size:9.6px;line-height:11.52px;color:#666666;letter-spacing:-0.288px;transform:scaleX(0.7825);transform-origin:0 50%;-webkit-text-stroke:0.3px #fdfdfd;">AaBbC</span><span class="t" style="left:4.80px;top:14px;font-size:4.8px;line-height:5.76px;color:#3a3a3a;letter-spacing:-0.030px;">Subtitle</span></div>
<div style="left:507px;top:28.6px;width:5.2px;height:22px;background:#3c3c3c;box-sizing:border-box;border:0.5px solid #4c4c4c;"></div>
<svg style="left:508.2px;top:31.6px;" width="3" height="2" viewBox="0 0 3 2"><path d="M0.3 1.6L1.5 0.4L2.7 1.6" fill="none" stroke="#5c5c5c" stroke-width="0.5"/></svg>
<svg style="left:508.2px;top:38.6px;" width="3" height="2" viewBox="0 0 3 2"><path d="M0.3 0.4L1.5 1.6L2.7 0.4" fill="none" stroke="#5c5c5c" stroke-width="0.5"/></svg>
<svg style="left:508px;top:45px;" width="3.4" height="3.6" viewBox="0 0 3.4 3.6"><path d="M0.3 0.4H3.1" stroke="#d0d0d0" stroke-width="0.5"/><path d="M0.3 1.6H3.1L1.7 3.2Z" fill="#d0d0d0"/></svg>
<svg style="left:521.4px;top:28.2px;" width="6.4" height="6.4" viewBox="0 0 6.4 6.4"><circle cx="3.8" cy="2.4" r="1.9" fill="#9cc3ee" stroke="#e8e8e8" stroke-width="0.6"/><path d="M2.4 3.8L0.5 5.8" stroke="#d8d8d8" stroke-width="0.9"/></svg>
<span class="t" style="left:528.80px;top:30px;font-size:4.9px;line-height:5.88px;color:#f0f0f0;letter-spacing:-0.147px;transform:scaleX(0.9844);transform-origin:0 50%;">Find</span>
<svg style="left:541.8px;top:30.7px;" width="2.8" height="1.8" viewBox="0 0 2.8 1.8"><path d="M0.3 0.35H2.5L1.4 1.5Z" fill="#c4c4c4"/></svg>
<svg style="left:521px;top:36.8px;" width="7" height="7" viewBox="0 0 7 7"><text x="0.2" y="3.2" font-size="3.2" font-weight="bold" fill="#c58be0" font-family="Liberation Sans,sans-serif">ab</text><path d="M1.6 4.4H5M4 3.4L5.2 4.4L4 5.4" stroke="#7ab0ea" stroke-width="0.55" fill="none"/><text x="2.6" y="6.6" font-size="3.2" font-weight="bold" fill="#e0e0e0" font-family="Liberation Sans,sans-serif">ac</text></svg>
<span class="t" style="left:528.80px;top:39px;font-size:4.9px;line-height:5.88px;color:#f0f0f0;letter-spacing:-0.147px;transform:scaleX(0.9476);transform-origin:0 50%;">Replace</span>
<svg style="left:522.6px;top:46px;" width="4.6" height="6.6" viewBox="0 0 4.6 6.6"><path d="M0.5 0.4V5L1.8 3.9L2.8 6L3.6 5.6L2.7 3.6H4.2Z" fill="#f0f0f0" stroke="#9a9a9a" stroke-width="0.3"/></svg>
<span class="t" style="left:528.80px;top:48px;font-size:4.9px;line-height:5.88px;color:#f0f0f0;letter-spacing:-0.147px;transform:scaleX(0.9392);transform-origin:0 50%;">Select</span>
<svg style="left:542px;top:48.7px;" width="2.8" height="1.8" viewBox="0 0 2.8 1.8"><path d="M0.3 0.35H2.5L1.4 1.5Z" fill="#c4c4c4"/></svg>
<svg style="left:564.6px;top:28px;" width="11" height="13" viewBox="0 0 11 13"><path d="M1 0.6H6.2L9 3.4V7.6" fill="none" stroke="#2e4f8a" stroke-width="0.72"/><path d="M1 0.6V11.4H4.6" fill="none" stroke="#2e4f8a" stroke-width="0.72"/><path d="M3.2 7.6C4.6 6.4 5.2 4.6 4.8 3.4C4.2 4.8 5.6 6.6 7.4 7C5.8 6.8 4.2 7 3.2 7.6Z" fill="none" stroke="#2e4f8a" stroke-width="0.6"/><circle cx="7.8" cy="10" r="2.2" fill="none" stroke="#2e4f8a" stroke-width="0.72"/><path d="M6.6 10.6L8.8 9.2" stroke="#2e4f8a" stroke-width="0.6"/></svg>
<svg style="left:600.6px;top:28px;" width="11" height="13" viewBox="0 0 11 13"><path d="M1 0.6H6.2L9 3.4V7.6" fill="none" stroke="#2e4f8a" stroke-width="0.72"/><path d="M1 0.6V11.4H4.6" fill="none" stroke="#2e4f8a" stroke-width="0.72"/><path d="M3.2 7.6C4.6 6.4 5.2 4.6 4.8 3.4C4.2 4.8 5.6 6.6 7.4 7C5.8 6.8 4.2 7 3.2 7.6Z" fill="none" stroke="#2e4f8a" stroke-width="0.6"/><circle cx="7.4" cy="10" r="2.4" fill="none" stroke="#2e4f8a" stroke-width="0.72"/><rect x="6" y="9" width="2.8" height="2" fill="none" stroke="#2e4f8a" stroke-width="0.5"/></svg>
<svg style="left:628.6px;top:28px;" width="13" height="13" viewBox="0 0 13 13"><circle cx="5.4" cy="3.4" r="2.6" fill="none" stroke="#2e4f8a" stroke-width="0.72"/><path d="M0.8 11.6C0.8 8.4 2.6 6.8 5.4 6.8C7 6.8 8.2 7.4 9 8.4M0.8 11.6H6" fill="none" stroke="#2e4f8a" stroke-width="0.72"/><path d="M7 11.6C8.4 9.6 9.4 10.4 9 11.4C10 10.6 11 10.8 12.4 11.6" fill="none" stroke="#2e4f8a" stroke-width="0.6"/></svg>
<span class="t" style="left:558.10px;top:43px;font-size:4.9px;line-height:5.88px;color:#f0f0f0;letter-spacing:-0.147px;transform:scaleX(0.9166);transform-origin:0 50%;">Create PDF</span>
<span class="t" style="left:555.00px;top:50px;font-size:4.9px;line-height:5.88px;color:#f0f0f0;letter-spacing:-0.147px;transform:scaleX(0.9774);transform-origin:0 50%;">and Share link</span>
<span class="t" style="left:588.40px;top:43px;font-size:4.9px;line-height:5.88px;color:#f0f0f0;letter-spacing:-0.147px;transform:scaleX(0.9434);transform-origin:0 50%;">Create PDF and</span>
<span class="t" style="left:586.20px;top:50px;font-size:4.9px;line-height:5.88px;color:#f0f0f0;letter-spacing:-0.147px;transform:scaleX(0.9782);transform-origin:0 50%;">Share via Outlook</span>
<span class="t" style="left:627.10px;top:43px;font-size:4.9px;line-height:5.88px;color:#f0f0f0;letter-spacing:-0.147px;transform:scaleX(0.9212);transform-origin:0 50%;">Request</span>
<span class="t" style="left:624.40px;top:50px;font-size:4.9px;line-height:5.88px;color:#f0f0f0;letter-spacing:-0.147px;transform:scaleX(0.9591);transform-origin:0 50%;">Signatures</span>
<svg style="left:655px;top:28px;" width="13" height="12.6" viewBox="0 0 13 12.6"><path d="M1.2 11L2.2 8L8.4 0.8L10.2 2.4L4 9.8Z" fill="#f2f2f2"/><path d="M1.2 11L2.2 8L4 9.8Z" fill="#bcd4f2"/><g fill="#3b83d8"><path d="M8.2 4.6H12L11.2 5.9H7.2Z"/><path d="M6.4 6.8H10.8L10 8.1H5.4Z"/><path d="M4.8 9H9.4L8.6 10.3H4Z"/></g></svg>
<span class="t" style="left:655.00px;top:43px;font-size:4.9px;line-height:5.88px;color:#f0f0f0;letter-spacing:-0.147px;transform:scaleX(0.9863);transform-origin:0 50%;">Editor</span>
<svg style="left:681.6px;top:30.6px;" width="6" height="6" viewBox="0 0 6 6"><circle cx="3" cy="3" r="2.1" fill="#f5a623"/><circle cx="3" cy="3" r="2.7" fill="none" stroke="#7a5a22" stroke-width="0.5"/></svg>
<span class="t" style="left:676.40px;top:43px;font-size:4.9px;line-height:5.88px;color:#f0f0f0;letter-spacing:-0.002px;">Add-ins</span>
<div style="left:214.3px;top:64px;width:17.4px;height:3.8px;background:#050505;"></div>
<div style="left:231.7px;top:64px;width:287.3px;height:3.8px;background:#3a3a3a;"></div>
<div style="left:519px;top:64px;width:10px;height:3.8px;background:#050505;"></div>
<div style="left:529px;top:64px;width:4.5px;height:3.8px;background:#3a3a3a;"></div>
<div style="left:341.2px;top:64px;width:5.4px;height:3.8px;background:#1a1a1a;"></div>
<span class="t" style="left:249.53px;top:64px;font-size:3.5px;line-height:4.2px;color:#e0e0e0;">1</span>
<span class="t" style="left:264.28px;top:64px;font-size:3.5px;line-height:4.2px;color:#e0e0e0;">2</span>
<span class="t" style="left:279.03px;top:64px;font-size:3.5px;line-height:4.2px;color:#e0e0e0;">3</span>
<span class="t" style="left:293.78px;top:64px;font-size:3.5px;line-height:4.2px;color:#e0e0e0;">4</span>
<span class="t" style="left:308.53px;top:64px;font-size:3.5px;line-height:4.2px;color:#e0e0e0;">5</span>
<span class="t" style="left:323.28px;top:64px;font-size:3.5px;line-height:4.2px;color:#e0e0e0;">6</span>
<span class="t" style="left:338.03px;top:64px;font-size:3.5px;line-height:4.2px;color:#e0e0e0;">7</span>
<span class="t" style="left:352.78px;top:64px;font-size:3.5px;line-height:4.2px;color:#e0e0e0;">8</span>
<span class="t" style="left:367.53px;top:64px;font-size:3.5px;line-height:4.2px;color:#e0e0e0;">9</span>
<span class="t" style="left:381.30px;top:64px;font-size:3.5px;line-height:4.2px;color:#e0e0e0;">10</span>
<span class="t" style="left:396.18px;top:64px;font-size:3.5px;line-height:4.2px;color:#e0e0e0;">11</span>
<span class="t" style="left:410.80px;top:64px;font-size:3.5px;line-height:4.2px;color:#e0e0e0;">12</span>
<span class="t" style="left:425.55px;top:64px;font-size:3.5px;line-height:4.2px;color:#e0e0e0;">13</span>
<span class="t" style="left:440.30px;top:64px;font-size:3.5px;line-height:4.2px;color:#e0e0e0;">14</span>
<span class="t" style="left:455.05px;top:64px;font-size:3.5px;line-height:4.2px;color:#e0e0e0;">15</span>
<span class="t" style="left:469.80px;top:64px;font-size:3.5px;line-height:4.2px;color:#e0e0e0;">16</span>
<span class="t" style="left:484.55px;top:64px;font-size:3.5px;line-height:4.2px;color:#e0e0e0;">17</span>
<span class="t" style="left:499.30px;top:64px;font-size:3.5px;line-height:4.2px;color:#e0e0e0;">18</span>
<span class="t" style="left:514.05px;top:64px;font-size:3.5px;line-height:4.2px;color:#e0e0e0;">19</span>
<span class="t" style="left:528.80px;top:64px;font-size:3.5px;line-height:4.2px;color:#e0e0e0;">20</span>
<svg style="left:0px;top:0px;" width="745" height="70" viewBox="0 0 745 70"><rect x="224.44" y="65.6" width="0.5" height="0.7" fill="#707070"/><rect x="228.12" y="65.3" width="0.5" height="1.3" fill="#707070"/><rect x="231.81" y="65.6" width="0.5" height="0.7" fill="#707070"/><rect x="239.19" y="65.6" width="0.5" height="0.7" fill="#707070"/><rect x="242.88" y="65.3" width="0.5" height="1.3" fill="#707070"/><rect x="246.56" y="65.6" width="0.5" height="0.7" fill="#707070"/><rect x="253.94" y="65.6" width="0.5" height="0.7" fill="#707070"/><rect x="257.62" y="65.3" width="0.5" height="1.3" fill="#707070"/><rect x="261.31" y="65.6" width="0.5" height="0.7" fill="#707070"/><rect x="268.69" y="65.6" width="0.5" height="0.7" fill="#707070"/><rect x="272.38" y="65.3" width="0.5" height="1.3" fill="#707070"/><rect x="276.06" y="65.6" width="0.5" height="0.7" fill="#707070"/><rect x="283.44" y="65.6" width="0.5" height="0.7" fill="#707070"/><rect x="287.12" y="65.3" width="0.5" height="1.3" fill="#707070"/><rect x="290.81" y="65.6" width="0.5" height="0.7" fill="#707070"/><rect x="298.19" y="65.6" width="0.5" height="0.7" fill="#707070"/><rect x="301.88" y="65.3" width="0.5" height="1.3" fill="#707070"/><rect x="305.56" y="65.6" width="0.5" height="0.7" fill="#707070"/><rect x="312.94" y="65.6" width="0.5" height="0.7" fill="#707070"/><rect x="316.62" y="65.3" width="0.5" height="1.3" fill="#707070"/><rect x="320.31" y="65.6" width="0.5" height="0.7" fill="#707070"/><rect x="327.69" y="65.6" width="0.5" height="0.7" fill="#707070"/><rect x="331.38" y="65.3" width="0.5" height="1.3" fill="#707070"/><rect x="335.06" y="65.6" width="0.5" height="0.7" fill="#707070"/><rect x="342.44" y="65.6" width="0.5" height="0.7" fill="#707070"/><rect x="346.12" y="65.3" width="0.5" height="1.3" fill="#707070"/><rect x="349.81" y="65.6" width="0.5" height="0.7" fill="#707070"/><rect x="357.19" y="65.6" width="0.5" height="0.7" fill="#707070"/><rect x="360.88" y="65.3" width="0.5" height="1.3" fill="#707070"/><rect x="364.56" y="65.6" width="0.5" height="0.7" fill="#707070"/><rect x="371.94" y="65.6" width="0.5" height="0.7" fill="#707070"/><rect x="375.62" y="65.3" width="0.5" height="1.3" fill="#707070"/><rect x="379.31" y="65.6" width="0.5" height="0.7" fill="#707070"/><rect x="386.69" y="65.6" width="0.5" height="0.7" fill="#707070"/><rect x="390.38" y="65.3" width="0.5" height="1.3" fill="#707070"/><rect x="394.06" y="65.6" width="0.5" height="0.7" fill="#707070"/><rect x="401.44" y="65.6" width="0.5" height="0.7" fill="#707070"/><rect x="405.12" y="65.3" width="0.5" height="1.3" fill="#707070"/><rect x="408.81" y="65.6" width="0.5" height="0.7" fill="#707070"/><rect x="416.19" y="65.6" width="0.5" height="0.7" fill="#707070"/><rect x="419.88" y="65.3" width="0.5" height="1.3" fill="#707070"/><rect x="423.56" y="65.6" width="0.5" height="0.7" fill="#707070"/><rect x="430.94" y="65.6" width="0.5" height="0.7" fill="#707070"/><rect x="434.62" y="65.3" width="0.5" height="1.3" fill="#707070"/><rect x="438.31" y="65.6" width="0.5" height="0.7" fill="#707070"/><rect x="445.69" y="65.6" width="0.5" height="0.7" fill="#707070"/><rect x="449.38" y="65.3" width="0.5" height="1.3" fill="#707070"/><rect x="453.06" y="65.6" width="0.5" height="0.7" fill="#707070"/><rect x="460.44" y="65.6" width="0.5" height="0.7" fill="#707070"/><rect x="464.12" y="65.3" width="0.5" height="1.3" fill="#707070"/><rect x="467.81" y="65.6" width="0.5" height="0.7" fill="#707070"/><rect x="475.19" y="65.6" width="0.5" height="0.7" fill="#707070"/><rect x="478.88" y="65.3" width="0.5" height="1.3" fill="#707070"/><rect x="482.56" y="65.6" width="0.5" height="0.7" fill="#707070"/><rect x="489.94" y="65.6" width="0.5" height="0.7" fill="#707070"/><rect x="493.62" y="65.3" width="0.5" height="1.3" fill="#707070"/><rect x="497.31" y="65.6" width="0.5" height="0.7" fill="#707070"/><rect x="504.69" y="65.6" width="0.5" height="0.7" fill="#707070"/><rect x="508.38" y="65.3" width="0.5" height="1.3" fill="#707070"/><rect x="512.06" y="65.6" width="0.5" height="0.7" fill="#707070"/><rect x="519.44" y="65.6" width="0.5" height="0.7" fill="#707070"/><rect x="523.12" y="65.3" width="0.5" height="1.3" fill="#707070"/><rect x="526.81" y="65.6" width="0.5" height="0.7" fill="#707070"/></svg>
<svg style="left:234.6px;top:62.8px;" width="2.6" height="8" viewBox="0 0 2.6 8"><path d="M0.2 0.3H2.4L1.3 1.5Z" fill="#d0d0d0"/><path d="M1.3 3.2L2.4 4.4H0.2Z" fill="#d0d0d0"/><rect x="0.3" y="4.9" width="2" height="0.9" fill="#c4c4c4"/></svg>
<svg style="left:262px;top:66px;" width="3" height="3" viewBox="0 0 3 3"><path d="M0.4 0.3V2.4H2.4" fill="none" stroke="#c0c0c0" stroke-width="0.5"/></svg>
<svg style="left:321.6px;top:66px;" width="3.2" height="2.4" viewBox="0 0 3.2 2.4"><path d="M1.6 0.2L3 1.8H0.2Z" fill="#e0e0e0"/></svg>
<div style="left:1.3px;top:62.8px;width:8.2px;height:7.4px;background:#0c0c0c;"></div>
<svg style="left:3.6px;top:65px;" width="3.4" height="3.4" viewBox="0 0 3.4 3.4"><path d="M0.5 0.5L2.8 2.8M2.8 2.8H1.2" fill="none" stroke="#d8d8d8" stroke-width="0.7"/></svg>
<div style="left:2.7px;top:77.6px;width:4.2px;height:19.2px;background:#050505;"></div>
<div style="left:2.7px;top:96.8px;width:4.2px;height:294px;background:#3a3a3a;"></div>
<div style="left:2.7px;top:214.6px;width:4.2px;height:3.6px;background:#0a0a0a;"></div>
<span class="t" style="left:2.7px;top:109.25px;width:4.2px;text-align:center;font-size:3.5px;line-height:4.2px;color:#cfcfcf;">1</span>
<span class="t" style="left:2.7px;top:124.00px;width:4.2px;text-align:center;font-size:3.5px;line-height:4.2px;color:#cfcfcf;">2</span>
<span class="t" style="left:2.7px;top:138.75px;width:4.2px;text-align:center;font-size:3.5px;line-height:4.2px;color:#cfcfcf;">3</span>
<span class="t" style="left:2.7px;top:153.50px;width:4.2px;text-align:center;font-size:3.5px;line-height:4.2px;color:#cfcfcf;">4</span>
<span class="t" style="left:2.7px;top:168.25px;width:4.2px;text-align:center;font-size:3.5px;line-height:4.2px;color:#cfcfcf;">5</span>
<span class="t" style="left:2.7px;top:183.00px;width:4.2px;text-align:center;font-size:3.5px;line-height:4.2px;color:#cfcfcf;">6</span>
<span class="t" style="left:2.7px;top:197.75px;width:4.2px;text-align:center;font-size:3.5px;line-height:4.2px;color:#cfcfcf;">7</span>
<span class="t" style="left:2.7px;top:212.50px;width:4.2px;text-align:center;font-size:3.5px;line-height:4.2px;color:#cfcfcf;">8</span>
<span class="t" style="left:2.7px;top:227.25px;width:4.2px;text-align:center;font-size:3.5px;line-height:4.2px;color:#cfcfcf;">9</span>
<span class="t" style="left:2.7px;top:242.00px;width:4.2px;text-align:center;font-size:3.5px;line-height:4.2px;color:#cfcfcf;">10</span>
<span class="t" style="left:2.7px;top:256.75px;width:4.2px;text-align:center;font-size:3.5px;line-height:4.2px;color:#cfcfcf;">11</span>
<span class="t" style="left:2.7px;top:271.50px;width:4.2px;text-align:center;font-size:3.5px;line-height:4.2px;color:#cfcfcf;">12</span>
<span class="t" style="left:2.7px;top:286.25px;width:4.2px;text-align:center;font-size:3.5px;line-height:4.2px;color:#cfcfcf;">13</span>
<span class="t" style="left:2.7px;top:301.00px;width:4.2px;text-align:center;font-size:3.5px;line-height:4.2px;color:#cfcfcf;">14</span>
<span class="t" style="left:2.7px;top:315.75px;width:4.2px;text-align:center;font-size:3.5px;line-height:4.2px;color:#cfcfcf;">15</span>
<span class="t" style="left:2.7px;top:330.50px;width:4.2px;text-align:center;font-size:3.5px;line-height:4.2px;color:#cfcfcf;">16</span>
<span class="t" style="left:2.7px;top:345.25px;width:4.2px;text-align:center;font-size:3.5px;line-height:4.2px;color:#cfcfcf;">17</span>
<span class="t" style="left:2.7px;top:360.00px;width:4.2px;text-align:center;font-size:3.5px;line-height:4.2px;color:#cfcfcf;">18</span>
<span class="t" style="left:2.7px;top:374.75px;width:4.2px;text-align:center;font-size:3.5px;line-height:4.2px;color:#cfcfcf;">19</span>
<svg style="left:0px;top:0px;" width="10" height="400" viewBox="0 0 10 400"><rect x="4.45" y="85.29" width="0.7" height="0.5" fill="#707070"/><rect x="4.15" y="88.97" width="1.3" height="0.5" fill="#707070"/><rect x="4.45" y="92.66" width="0.7" height="0.5" fill="#707070"/><rect x="4.45" y="100.04" width="0.7" height="0.5" fill="#707070"/><rect x="4.15" y="103.72" width="1.3" height="0.5" fill="#707070"/><rect x="4.45" y="107.41" width="0.7" height="0.5" fill="#707070"/><rect x="4.45" y="114.79" width="0.7" height="0.5" fill="#707070"/><rect x="4.15" y="118.47" width="1.3" height="0.5" fill="#707070"/><rect x="4.45" y="122.16" width="0.7" height="0.5" fill="#707070"/><rect x="4.45" y="129.54" width="0.7" height="0.5" fill="#707070"/><rect x="4.15" y="133.22" width="1.3" height="0.5" fill="#707070"/><rect x="4.45" y="136.91" width="0.7" height="0.5" fill="#707070"/><rect x="4.45" y="144.29" width="0.7" height="0.5" fill="#707070"/><rect x="4.15" y="147.97" width="1.3" height="0.5" fill="#707070"/><rect x="4.45" y="151.66" width="0.7" height="0.5" fill="#707070"/><rect x="4.45" y="159.04" width="0.7" height="0.5" fill="#707070"/><rect x="4.15" y="162.72" width="1.3" height="0.5" fill="#707070"/><rect x="4.45" y="166.41" width="0.7" height="0.5" fill="#707070"/><rect x="4.45" y="173.79" width="0.7" height="0.5" fill="#707070"/><rect x="4.15" y="177.47" width="1.3" height="0.5" fill="#707070"/><rect x="4.45" y="181.16" width="0.7" height="0.5" fill="#707070"/><rect x="4.45" y="188.54" width="0.7" height="0.5" fill="#707070"/><rect x="4.15" y="192.22" width="1.3" height="0.5" fill="#707070"/><rect x="4.45" y="195.91" width="0.7" height="0.5" fill="#707070"/><rect x="4.45" y="203.29" width="0.7" height="0.5" fill="#707070"/><rect x="4.15" y="206.97" width="1.3" height="0.5" fill="#707070"/><rect x="4.45" y="210.66" width="0.7" height="0.5" fill="#707070"/><rect x="4.45" y="218.04" width="0.7" height="0.5" fill="#707070"/><rect x="4.15" y="221.72" width="1.3" height="0.5" fill="#707070"/><rect x="4.45" y="225.41" width="0.7" height="0.5" fill="#707070"/><rect x="4.45" y="232.79" width="0.7" height="0.5" fill="#707070"/><rect x="4.15" y="236.47" width="1.3" height="0.5" fill="#707070"/><rect x="4.45" y="240.16" width="0.7" height="0.5" fill="#707070"/><rect x="4.45" y="247.54" width="0.7" height="0.5" fill="#707070"/><rect x="4.15" y="251.22" width="1.3" height="0.5" fill="#707070"/><rect x="4.45" y="254.91" width="0.7" height="0.5" fill="#707070"/><rect x="4.45" y="262.29" width="0.7" height="0.5" fill="#707070"/><rect x="4.15" y="265.98" width="1.3" height="0.5" fill="#707070"/><rect x="4.45" y="269.66" width="0.7" height="0.5" fill="#707070"/><rect x="4.45" y="277.04" width="0.7" height="0.5" fill="#707070"/><rect x="4.15" y="280.73" width="1.3" height="0.5" fill="#707070"/><rect x="4.45" y="284.41" width="0.7" height="0.5" fill="#707070"/><rect x="4.45" y="291.79" width="0.7" height="0.5" fill="#707070"/><rect x="4.15" y="295.48" width="1.3" height="0.5" fill="#707070"/><rect x="4.45" y="299.16" width="0.7" height="0.5" fill="#707070"/><rect x="4.45" y="306.54" width="0.7" height="0.5" fill="#707070"/><rect x="4.15" y="310.23" width="1.3" height="0.5" fill="#707070"/><rect x="4.45" y="313.91" width="0.7" height="0.5" fill="#707070"/><rect x="4.45" y="321.29" width="0.7" height="0.5" fill="#707070"/><rect x="4.15" y="324.98" width="1.3" height="0.5" fill="#707070"/><rect x="4.45" y="328.66" width="0.7" height="0.5" fill="#707070"/><rect x="4.45" y="336.04" width="0.7" height="0.5" fill="#707070"/><rect x="4.15" y="339.73" width="1.3" height="0.5" fill="#707070"/><rect x="4.45" y="343.41" width="0.7" height="0.5" fill="#707070"/><rect x="4.45" y="350.79" width="0.7" height="0.5" fill="#707070"/><rect x="4.15" y="354.48" width="1.3" height="0.5" fill="#707070"/><rect x="4.45" y="358.16" width="0.7" height="0.5" fill="#707070"/><rect x="4.45" y="365.54" width="0.7" height="0.5" fill="#707070"/><rect x="4.15" y="369.23" width="1.3" height="0.5" fill="#707070"/><rect x="4.45" y="372.91" width="0.7" height="0.5" fill="#707070"/><rect x="4.45" y="380.29" width="0.7" height="0.5" fill="#707070"/><rect x="4.15" y="383.98" width="1.3" height="0.5" fill="#707070"/><rect x="4.45" y="387.66" width="0.7" height="0.5" fill="#707070"/></svg>
<div style="left:738.2px;top:71.5px;width:6px;height:319.5px;background:#0a0a0a;"></div>
<div style="left:738.2px;top:71.5px;width:6px;height:5.4px;background:#4a4a4a;"></div>
<svg style="left:739.6px;top:72.8px;" width="3.4" height="2.6" viewBox="0 0 3.4 2.6"><path d="M1.7 0.3L3.2 2.2H0.2Z" fill="#f0f0f0"/></svg>
<div style="left:738.2px;top:77.4px;width:6px;height:231px;background:#424242;"></div>
<div style="left:738.2px;top:384px;width:6px;height:5.6px;background:#4a4a4a;"></div>
<svg style="left:739.6px;top:385.6px;" width="3.4" height="2.6" viewBox="0 0 3.4 2.6"><path d="M1.7 2.3L3.2 0.4H0.2Z" fill="#f0f0f0"/></svg>
<div style="left:0px;top:391px;width:745px;height:9px;background:#1b1b1b;"></div>
<span class="t" style="left:5.00px;top:394px;font-size:4.9px;line-height:5.88px;color:#ececec;letter-spacing:-0.147px;transform:scaleX(0.9112);transform-origin:0 50%;">Page 1 of 1</span>
<span class="t" style="left:35.00px;top:394px;font-size:4.9px;line-height:5.88px;color:#ececec;letter-spacing:-0.147px;transform:scaleX(0.9565);transform-origin:0 50%;">244 words</span>
<svg style="left:62.6px;top:393px;" width="6.4" height="5.4" viewBox="0 0 6.4 5.4"><path d="M0.4 0.5H3V4.4H0.4Z" fill="none" stroke="#c8c8c8" stroke-width="0.5"/><path d="M3 0.5H5.4V3" fill="none" stroke="#c8c8c8" stroke-width="0.5"/><path d="M3.6 3.8L4.6 4.8L6.2 2.8" fill="none" stroke="#c8c8c8" stroke-width="0.6"/></svg>
<span class="t" style="left:75.50px;top:394px;font-size:4.9px;line-height:5.88px;color:#ececec;letter-spacing:-0.147px;transform:scaleX(0.9492);transform-origin:0 50%;">English (United States)</span>
<svg style="left:126.4px;top:392.8px;" width="6" height="6" viewBox="0 0 6 6"><circle cx="3" cy="3" r="2.5" fill="none" stroke="#c8c8c8" stroke-width="0.55"/><path d="M1.6 2.4H4.4M3 2.4V3.6M2.2 4.8L3 3.6L3.8 4.8" fill="none" stroke="#c8c8c8" stroke-width="0.5"/><circle cx="3" cy="1.5" r="0.4" fill="#c8c8c8"/></svg>
<span class="t" style="left:135.00px;top:393px;font-size:4.5px;line-height:5.4px;color:#ececec;letter-spacing:-0.011px;">Accessibility: Good to go</span>
<svg style="left:579.4px;top:392.6px;" width="7" height="6" viewBox="0 0 7 6"><rect x="0.4" y="0.4" width="5.4" height="4" fill="none" stroke="#d0d0d0" stroke-width="0.6"/><circle cx="5.2" cy="4.2" r="1.5" fill="#1b1b1b" stroke="#d0d0d0" stroke-width="0.5"/></svg>
<span class="t" style="left:586.60px;top:394px;font-size:4.9px;line-height:5.88px;color:#ececec;letter-spacing:-0.147px;transform:scaleX(0.9597);transform-origin:0 50%;">Display Settings</span>
<svg style="left:627.8px;top:392.8px;" width="6.4" height="5.6" viewBox="0 0 6.4 5.6"><path d="M0.4 0.6H2.8V5H0.4ZM3.6 0.6H6V5H3.6Z" fill="#7c7c7c" stroke="#b4b4b4" stroke-width="0.4"/></svg>
<div style="left:640px;top:391.2px;width:14.4px;height:8.6px;background:#4a4a4a;"></div>
<svg style="left:643.8px;top:392.8px;" width="6.8" height="5.6" viewBox="0 0 6.8 5.6"><rect x="0.4" y="0.4" width="6" height="4.8" fill="#8a8a8a" stroke="#a8a8a8" stroke-width="0.4"/></svg>
<svg style="left:659.2px;top:392.8px;" width="6.8" height="5.6" viewBox="0 0 6.8 5.6"><rect x="0.4" y="0.4" width="4.6" height="4.4" fill="#6c6c6c" stroke="#b0b0b0" stroke-width="0.4"/><circle cx="5" cy="4.2" r="1.3" fill="#1b1b1b" stroke="#b0b0b0" stroke-width="0.4"/></svg>
<div style="left:672.6px;top:395.3px;width:2.6px;height:0.5px;background:#c8c8c8;"></div>
<div style="left:677.6px;top:395.3px;width:38px;height:0.5px;background:#9a9a9a;"></div>
<div style="left:696.3px;top:392.6px;width:1.4px;height:6px;background:#e4e4e4;"></div>
<div style="left:717.8px;top:395.3px;width:2.8px;height:0.5px;background:#c8c8c8;"></div>
<div style="left:718.95px;top:394.1px;width:0.5px;height:2.8px;background:#c8c8c8;"></div>
<span class="t" style="left:726.40px;top:394px;font-size:4.9px;line-height:5.88px;color:#ececec;letter-spacing:-0.147px;transform:scaleX(0.9428);transform-origin:0 50%;">100%</span>
<div style="left:0px;top:25px;width:1.2px;height:366px;background:#1b1b1b;"></div>
<div style="left:744.1px;top:25px;width:0.9px;height:366px;background:#1f1f1f;"></div>
</div></body></html>
